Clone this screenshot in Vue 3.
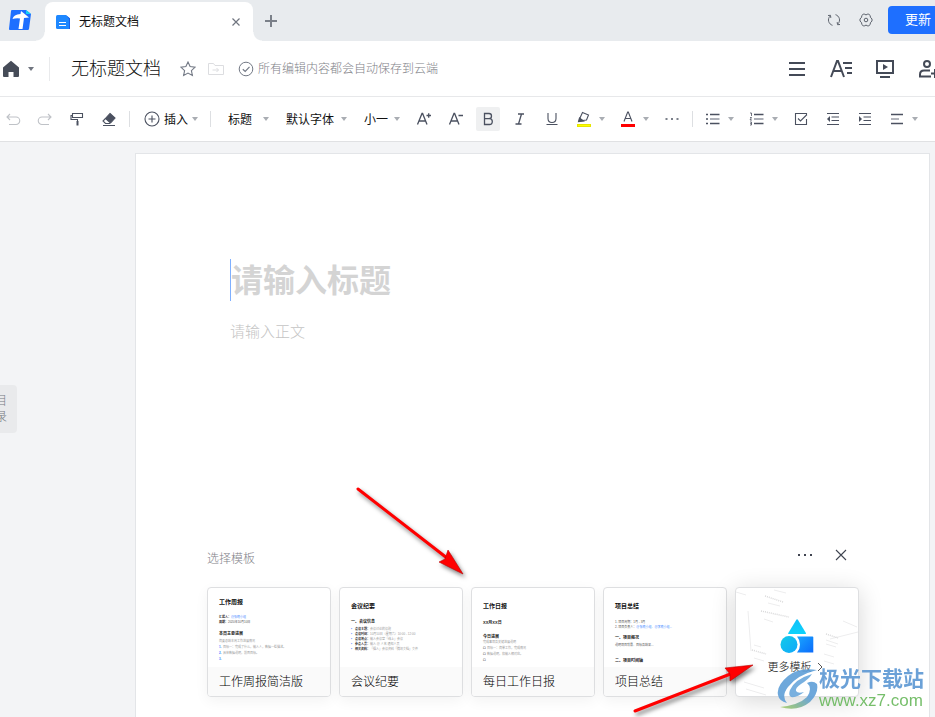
<script setup>
import { ref } from 'vue'

const title = ref('')
const body = ref('')

const caret = 'M0 0h6L3 4z'

const picks = [
  { label: '段落样式', value: '标题', cls: 'w-short' },
  { label: '字体', value: '默认字体', cls: 'w-long' },
  { label: '字号', value: '小一', cls: 'w-size' },
]

const templates = [
  {
    name: '工作周报简洁版',
    cls: 'weekly',
    heading: '工作周报',
    lines: [
      { k: 'meta', b: '汇报人：', link: '@张晓小组' },
      { k: 'meta', b: '周期：', t: '2020年10月10日' },
      { k: 'sub', b: '本周主要进展' },
      { k: 'faint', t: '简要总结本周工作进展情况' },
      { k: 'item', n: '1.', t: '目标一：完成了什么，输入人，数据一些描述。' },
      { k: 'item', n: '2.', t: '具体数据说明，前面目标。' },
      { k: 'item', n: '3.', t: '' },
    ],
  },
  {
    name: '会议纪要',
    cls: 'meeting',
    heading: '会议纪要',
    lines: [
      { k: 'sub', b: '一、会议信息' },
      { k: 'item', n: '•', b: '会议主题：', t: '会议讨论的议题' },
      { k: 'item', n: '•', b: '会议时间：', t: '10月10日（星期六）10:00 - 12:00' },
      { k: 'item', n: '•', b: '会议地点：', t: '输入会议室「线上」会议' },
      { k: 'item', n: '•', b: '参会人员：', t: '输入 @ 人名 通知人员' },
      { k: 'item', n: '•', b: '相关资料：', t: '「插入」会议资料「腾讯文档」文件' },
    ],
  },
  {
    name: '每日工作日报',
    cls: 'daily',
    heading: '工作日报',
    lines: [
      { k: 'sub', b: 'XX月XX日' },
      { k: 'sub', b: '今日进展' },
      { k: 'faint', t: '完成事项及关键进展说明' },
      { k: 'item', n: '☐', t: '目标一：简单工作，完成情况' },
      { k: 'item', n: '☐', t: '数据说明，和输入相对应。' },
      { k: 'item', n: '☐', t: '' },
    ],
  },
  {
    name: '项目总结',
    cls: 'summary',
    heading: '项目总结',
    lines: [
      { k: 'meta', t: '1. 项目周期：1月 - 3月' },
      { k: 'meta', t: '2. 项目负责人：', link: '@张晓小组、@李晓小组...' },
      { k: 'sub', b: '一、项目概况' },
      { k: 'meta', t: '说明项目背景、目标及结果...' },
      { k: 'sub last', b: '二、项目时间轴' },
    ],
  },
]
</script>

<template>
  <div class="app">
    <header class="tabs">
      <svg class="logo" viewBox="0 0 24 22">
        <path d="M4 1h14l5 4-2 15q-.2 1-1.200 1H2q-1.200 0-1-1.200L3 2q.1-1 1-1z" fill="#1e6fff" />
        <path d="M18 1l5 4h-5z" fill="#12d3f5" />
        <path d="M13 2l8 6.500-5 .5-1.500 11H10.500L12 9.500Q8 9 4.500 10 5.500 5.500 12.500 5z" fill="#fff" />
      </svg>
      <div class="tab">
        <svg class="doc" viewBox="0 0 14 14">
          <path d="M1.500 0H10l4 3.500V14H1.500Q0 14 0 12.500v-11Q0 0 1.500 0z" fill="#1e88ff" />
          <path d="M10 0l4 3.500V14h-1V4z" fill="#1b5fe8" />
          <path d="M3 7.500h7M3 10.500h7" stroke="#fff" stroke-width="1" />
        </svg>
        <span class="tab-name">无标题文档</span>
        <button class="ghost" aria-label="关闭标签">
          <svg width="8" height="8" viewBox="0 0 8 8"><path d="M.5.5l7 7M7.500.5l-7 7" stroke="#70757f" stroke-width="1.200" /></svg>
        </button>
      </div>
      <button class="ghost plus" aria-label="新建标签">
        <svg width="12" height="12" viewBox="0 0 12 12"><path d="M6 0v12M0 6h12" stroke="#7b8089" stroke-width="2" /></svg>
      </button>
      <div class="window-tools">
        <button class="ghost" aria-label="刷新">
          <svg width="14" height="14" viewBox="0 0 14 14" fill="none" stroke="#5c626c" stroke-width="1">
            <path d="M5.500 12.300A5.500 5.500 0 0 1 3 3.200M1 2.500l2.500-.2.300 2.600M8.500 1.700A5.500 5.500 0 0 1 11 10.800M13 11.500l-2.500.2-.3-2.600" />
          </svg>
        </button>
        <button class="ghost" aria-label="设置">
          <svg width="14" height="14" viewBox="0 0 14 14" fill="none" stroke="#5c626c" stroke-width="1">
            <path d="M4.200 1.200h1.600L7 2l1.200-.8h1.600l1.400 1.300.2 1.700L13 6v2l-1.600 1.800-.2 1.700-1.400 1.300H8.200L7 12l-1.200.8H4.200l-1.400-1.300-.2-1.700L1 8V6l1.600-1.800.2-1.700z" stroke-linejoin="round" />
            <circle cx="7" cy="7" r="1.800" />
          </svg>
        </button>
        <button class="update">更新</button>
      </div>
    </header>

    <section class="title-bar">
      <button class="ghost home" aria-label="首页">
        <svg width="18" height="18" viewBox="0 0 18 18"><path d="M9 .8L17 7.500V16q0 1-1 1h-4.500v-5H6.500v5H2q-1 0-1-1V7.500z" fill="#464c58" /></svg>
        <svg class="caret" viewBox="0 0 6 4"><path :d="caret" fill="#70757f" /></svg>
      </button>
      <i class="rule"></i>
      <h1>无标题文档</h1>
      <button class="ghost" aria-label="收藏">
        <svg width="16" height="16" viewBox="0 0 16 16"><path d="M8 1l2.100 4.600 5 .6-3.700 3.400 1 4.900L8 12.100l-4.400 2.400 1-4.900L.9 6.200l5-.6z" fill="none" stroke="#737985" stroke-width="1.100" /></svg>
      </button>
      <button class="ghost" aria-label="移动到">
        <svg width="16" height="14" viewBox="0 0 16 14" fill="none" stroke="#dcdde0"><path d="M.5 12.500V1.500h5l1.500 2h8.500v9zM4.500 8h6M8.500 6l2 2-2 2" /></svg>
      </button>
      <p class="saved">
        <svg width="16" height="16" viewBox="0 0 16 16" fill="none" stroke="#737985"><circle cx="8" cy="8" r="6.800" /><path d="M4.800 8.200l2.400 2.300 4.300-4.600" stroke-width="1.200" /></svg>
        <span>所有编辑内容都会自动保存到云端</span>
      </p>
      <div class="doc-tools">
        <button class="ghost" aria-label="菜单">
          <svg viewBox="0 0 24 24" stroke="#444a57" stroke-width="2"><path d="M4 6h16M4 12h16M4 18h16" /></svg>
        </button>
        <button class="ghost" aria-label="文字样式">
          <svg viewBox="0 0 24 24" fill="none" stroke="#444a57" stroke-width="2"><path d="M2 20L8 4h1l6 16M4.500 14h8M14 6h9M16 11h7M18 16h5" /></svg>
        </button>
        <button class="ghost" aria-label="演示">
          <svg viewBox="0 0 24 24" fill="none" stroke="#444a57" stroke-width="2"><path d="M4 4h16v12H4zM7 20h10" /><path d="M10 7l5 3-5 3z" fill="#444a57" stroke="none" /></svg>
        </button>
        <button class="ghost" aria-label="邀请协作">
          <svg viewBox="0 0 24 24" fill="none" stroke="#444a57" stroke-width="2"><circle cx="10" cy="7" r="3" /><path d="M14 19.500H3v-2q0-4 4-4h6M18 12v9M14 16.500h8" /></svg>
        </button>
      </div>
    </section>

    <nav class="toolbar" aria-label="格式">
      <button class="tool" aria-label="撤销">
        <svg viewBox="0 0 16 16" class="dim"><path d="M5 3L2 6l3 3M2 6h9a3.500 3.500 0 0 1 0 7.500H4" /></svg>
      </button>
      <button class="tool" aria-label="重做">
        <svg viewBox="0 0 16 16" class="dim"><path d="M11 3l3 3-3 3M14 6H5a3.500 3.500 0 0 0 0 7.500h7" /></svg>
      </button>
      <button class="tool" aria-label="格式刷">
        <svg viewBox="0 0 16 16"><path d="M3.500 2.500h10v4h-10zM3.500 4.500h-1.500v4h6.500v2" /><path d="M8.500 10v4.500" stroke-width="2" /></svg>
      </button>
      <button class="tool" aria-label="清除格式">
        <svg viewBox="0 0 16 16"><path d="M9 2.500l5 4.500-4.500 5-5-4.500z" class="solid" /><path d="M4.500 7.500L2 10l2.500 2.500H9M2 14.500h12" /></svg>
      </button>
      <i class="split"></i>
      <button class="insert">
        <svg width="16" height="16" viewBox="0 0 16 16"><circle cx="8" cy="8" r="7" /><path d="M8 4.500v7M4.500 8h7" /></svg>
        <span>插入</span>
        <svg class="caret" viewBox="0 0 6 4"><path :d="caret" /></svg>
      </button>
      <i class="split"></i>
      <div class="picks">
        <label v-for="p in picks" :key="p.value" class="pick">
          <select :class="p.cls" :aria-label="p.label"><option>{{ p.value }}</option></select>
          <svg class="caret" viewBox="0 0 6 4"><path :d="caret" /></svg>
        </label>
      </div>
      <button class="tool" aria-label="增大字号">
        <svg viewBox="0 0 16 16"><path d="M1.500 13.500L6 2.500h.6L11 13.500M3 10h6.500M10.500 4.500h4.500M12.700 2.200v4.600" stroke-width="1.300" /></svg>
      </button>
      <button class="tool" aria-label="减小字号">
        <svg viewBox="0 0 16 16"><path d="M1.500 13.500L6 2.500h.6L11 13.500M3 10h6.500M10.500 4.500h4.500" stroke-width="1.300" /></svg>
      </button>
      <button class="tool active" aria-label="加粗" aria-pressed="true">
        <svg viewBox="0 0 16 16"><path d="M4.500 2.500H9q2.500 0 2.500 2.600T9 7.700H4.500zM4.500 7.700H9.500q2.800 0 2.800 2.900T9.500 13.500h-5z" stroke-width="1.300" /></svg>
      </button>
      <button class="tool" aria-label="斜体">
        <svg viewBox="0 0 16 16"><path d="M6 3h6M3.500 13h6M9.500 3l-3 10" stroke-width="1.300" /></svg>
      </button>
      <button class="tool" aria-label="下划线">
        <svg viewBox="0 0 16 16"><path d="M4 2v5.500q0 4 4 4t4-4V2M2.500 13.500h11" /></svg>
      </button>
      <div class="combo">
        <button class="tool" aria-label="突出显示">
          <svg viewBox="0 0 16 16"><path d="M6.500 1.500l6 2.500-2 5-4 .5-3-1.500z" /><path d="M3.500 7l4 3-5 .5z" class="solid" /><path d="M1 14.500h14" stroke="#e6e600" stroke-width="3" /><path d="M2 14.500h12" stroke="#ff0" stroke-width="1" /></svg>
        </button>
        <svg class="caret" viewBox="0 0 6 4"><path :d="caret" /></svg>
      </div>
      <div class="combo">
        <button class="tool" aria-label="文字颜色">
          <svg viewBox="0 0 16 16"><path d="M4 10.500L7.700 1h.6L12 10.500M5.300 7.500h5.400" /><path d="M1 14.500h14" stroke="#f00" stroke-width="3" /></svg>
        </button>
        <svg class="caret" viewBox="0 0 6 4"><path :d="caret" /></svg>
      </div>
      <button class="tool" aria-label="更多格式">
        <svg viewBox="0 0 16 16"><path d="M1.500 8h2M7 8h2M12.500 8h2" stroke-width="2" stroke="#7b808a" /></svg>
      </button>
      <i class="split"></i>
      <div class="combo">
        <button class="tool" aria-label="项目符号">
          <svg viewBox="0 0 16 16"><path d="M1 3.500h2M1 8h2M1 12.500h2M5 3.500h9.500M5 12.500h9.500" stroke-width="1.500" /><path d="M5 8h9.500" stroke="#9296a0" stroke-width="1.500" /></svg>
        </button>
        <svg class="caret" viewBox="0 0 6 4"><path :d="caret" /></svg>
      </div>
      <div class="combo">
        <button class="tool" aria-label="编号">
          <svg viewBox="0 0 16 16"><path d="M5 3.500h9.500M5 12.500h9.500" stroke-width="1.300" /><path d="M5 8h9.500" stroke="#9296a0" stroke-width="1.500" /><path d="M1 2h1.500v3M1 6.500h1.500L1 9h2M1 11h1.500v1.500H1.500h1V14H1" stroke-width=".8" /></svg>
        </button>
        <svg class="caret" viewBox="0 0 6 4"><path :d="caret" /></svg>
      </div>
      <button class="tool" aria-label="任务列表">
        <svg viewBox="0 0 16 16"><path d="M13.500 8v5.500h-11v-11h11v2M5 7.500L7.500 10l6.500-6.500" /></svg>
      </button>
      <button class="tool" aria-label="减少缩进">
        <svg viewBox="0 0 16 16"><path d="M2 2.500h12M6.500 6h7.500M6.500 9.500h7.500M2 13.500h12" /><path d="M5 5v6L2 8z" class="solid" stroke="none" /></svg>
      </button>
      <button class="tool" aria-label="增加缩进">
        <svg viewBox="0 0 16 16"><path d="M2 2.500h12M6.500 6h7.500M6.500 9.500h7.500M2 13.500h12" /><path d="M2 5v6l3-3z" class="solid" stroke="none" /></svg>
      </button>
      <div class="combo">
        <button class="tool" aria-label="对齐">
          <svg viewBox="0 0 16 16"><path d="M2 3.500h12M2 12.500h12" stroke-width="1.400" /><path d="M2 8h8" stroke="#9296a0" stroke-width="1.400" /></svg>
        </button>
        <svg class="caret" viewBox="0 0 6 4"><path :d="caret" /></svg>
      </div>
    </nav>

    <main class="desk">
      <button class="outline">目录</button>
      <article class="page">
        <div class="editor">
          <input v-model="title" class="title-input" aria-label="标题" placeholder="请输入标题" />
          <input v-model="body" class="body-input" aria-label="正文" placeholder="请输入正文" />
        </div>
        <section class="templates">
          <div class="templates-head">
            <h2>选择模板</h2>
            <button class="ghost" aria-label="更多">
              <svg width="16" height="16" viewBox="0 0 16 16"><path d="M1 8h2M7 8h2M13 8h2" stroke="#3f4450" stroke-width="2" /></svg>
            </button>
            <button class="ghost" aria-label="关闭">
              <svg width="16" height="16" viewBox="0 0 16 16"><path d="M3 3l10 10M13 3L3 13" stroke="#3f4450" stroke-width="1.100" /></svg>
            </button>
          </div>
          <div class="cards">
            <button v-for="t in templates" :key="t.name" class="card">
              <span class="preview" :class="t.cls">
                <strong>{{ t.heading }}</strong>
                <span v-for="(l, i) in t.lines" :key="i" class="line" :class="l.k">
                  <i v-if="l.n">{{ l.n }}</i><b v-if="l.b">{{ l.b }}</b><span v-if="l.t">{{ l.t }}</span><em v-if="l.link">{{ l.link }}</em>
                </span>
              </span>
              <span class="card-name">{{ t.name }}</span>
            </button>
            <button class="card more">
              <svg class="sheets" viewBox="0 0 122 108" preserveAspectRatio="xMidYMid slice" fill="none" stroke="#ededee">
                <path d="M0 4l10 3M12 23l3 40M94 51l28-7" />
                <path d="M29 8l18 6M25 23l28 6M90 46l12 4M16 62l14 4" stroke="#d9d9da" stroke-width="1.500" stroke-dasharray="1 1" />
                <path d="M38 2l12 3M32 15l12 3M28 31l9 3M90 52l12 4M90 56l10 3M88 66l10 3M88 73l10 3M18 57l7 2M18 70l10 3M8 94l20 6M10 101l20 6M107 33l14 6" />
              </svg>
              <svg class="shapes" viewBox="0 0 34 34">
                <defs>
                  <linearGradient id="tri" x1="0" y1="0" x2="0" y2="1"><stop offset="0" stop-color="#0fc0fa" /><stop offset="1" stop-color="#0dd2fb" /></linearGradient>
                  <linearGradient id="dot" x1="0" y1="0" x2="1" y2="1"><stop offset="0" stop-color="#12cbe8" /><stop offset="1" stop-color="#10a8fb" /></linearGradient>
                  <linearGradient id="box" x1="0" y1="0" x2="1" y2="1"><stop offset="0" stop-color="#19a6ff" /><stop offset="1" stop-color="#0b6bfb" /></linearGradient>
                </defs>
                <path d="M16.500.5q.8-.6 1.400.3l8 13.200q.3 1-.8 1H9q-1.200 0-.7-1z" fill="url(#tri)" />
                <path d="M17 17.500h15.500q.8 0 .8.800v15.200H17q3-3.500 3-8t-3-8z" fill="url(#box)" />
                <circle cx="9" cy="25.500" r="8.500" fill="url(#dot)" />
              </svg>
              <span class="more-name">更多模板
                <svg width="6" height="10" viewBox="0 0 6 10"><path d="M1 1l4 4-4 4" fill="none" stroke="#555" /></svg>
              </span>
            </button>
          </div>
        </section>
      </article>
    </main>

    <svg class="arrow arrow-down" viewBox="0 0 116 96">
      <path d="M6 6L95 75" stroke="#f00" stroke-width="3" stroke-linecap="round" />
      <path d="M111 91L87 79l6-3 3-9z" fill="#f00" stroke="#b00" stroke-width=".6" />
    </svg>
    <svg class="arrow arrow-up" viewBox="0 0 130 58">
      <path d="M6 50L104 12" stroke="#f00" stroke-width="3" stroke-linecap="round" />
      <path d="M124 4L101 20v-7l-5-6z" fill="#f00" stroke="#b00" stroke-width=".6" />
    </svg>

    <div class="watermark">
      <svg width="42" height="42" viewBox="0 0 42 42">
        <defs>
          <linearGradient id="swirl" x1="1" y1="0" x2="0" y2="1"><stop offset=".4" stop-color="#5f9fd8" /><stop offset=".75" stop-color="#86b98a" /><stop offset="1" stop-color="#a9cf62" /></linearGradient>
        </defs>
        <path d="M40 2Q22-1 11 8-1 18 1 27q1 6 9 8-6-7 1-16Q20 7 40 2z" fill="#5f9fd8" />
        <path d="M35 6Q18 11 13 22q-2 5 1 7 6 1 13-5-6 2-8-1-1-3 5-7 8-5 11-10z" fill="#6ba8dc" />
        <path d="M30 15q6 5 0 14Q22 37 3 39q18 5 30-5 9-9 7-18-4-4-10-1z" fill="url(#swirl)" />
      </svg>
      <div>
        <strong>极光下载站</strong>
        <span>www.xz7.com</span>
      </div>
    </div>
  </div>
</template>

<style>
body {
  overflow: hidden;
}
</style>

<style scoped>
.app {
  position: relative;
  display: flex;
  flex-direction: column;
  min-height: 100vh;
  overflow: hidden;
  background: #fff;
  color: #111;
  font: 300 12px/16px "Liberation Sans", "Noto Sans CJK SC", sans-serif;
}
* {
  box-sizing: border-box;
}
button, input, select {
  margin: 0;
  padding: 0;
  border: 0;
  outline: 0;
  background: none;
  color: inherit;
  font: inherit;
}
h1, h2, p {
  margin: 0;
  font-weight: 300;
}
svg {
  display: block;
  flex: none;
}
.ghost {
  display: flex;
  align-items: center;
  justify-content: center;
}
.caret {
  width: 6px;
  height: 4px;
}

.tabs {
  display: flex;
  height: 41px;
  background: #e8ebee;
}
.logo {
  width: 24px;
  height: 22px;
  margin: 9px 13px 0 8px;
}
.tab {
  position: relative;
  display: flex;
  align-items: center;
  width: 208px;
  margin-top: 2px;
  padding: 0 13px 0 11px;
  border-radius: 8px 8px 0 0;
  background: #fff;
}
.tab::before,
.tab::after {
  content: "";
  position: absolute;
  bottom: 0;
  width: 9px;
  height: 9px;
}
.tab::before {
  right: 100%;
  background: radial-gradient(circle at 0 0, #e8ebee 8px, #fff 9px);
}
.tab::after {
  left: 100%;
  background: radial-gradient(circle at 100% 0, #e8ebee 8px, #fff 9px);
}
.doc {
  width: 14px;
  height: 14px;
}
.tab-name {
  flex: 1;
  margin-left: 9px;
  font-weight: 400;
}
.plus {
  margin-left: 12px;
}
.window-tools {
  display: flex;
  align-items: center;
  gap: 18px;
  margin: 0 -13px 2px auto;
}
.update {
  width: 60px;
  height: 28px;
  margin-left: -3px;
  border-radius: 4px;
  background: #1e6fff;
  color: #fff;
  font-size: 13px;
  font-weight: 400;
}

.title-bar {
  display: flex;
  align-items: center;
  height: 56px;
  padding-left: 2px;
  border-bottom: 1px solid #e7e8ea;
}
.home {
  gap: 8px;
}
.rule {
  width: 1px;
  height: 24px;
  margin: 0 21px 0 15px;
  background: #e9eaec;
}
h1 {
  margin-right: 19px;
  font-size: 18px;
  line-height: 32px;
}
h1 + .ghost {
  margin-right: 12px;
}
.saved {
  display: flex;
  align-items: center;
  gap: 4px;
  margin-left: 14px;
  color: #7f8288;
}
.saved span {
  padding-top: 1px;
}
.doc-tools {
  display: flex;
  gap: 20px;
  margin: 0 -6px 0 auto;
}
.doc-tools svg {
  width: 24px;
  height: 24px;
}

.toolbar {
  display: flex;
  align-items: center;
  gap: 8px;
  height: 45px;
  padding-left: 1px;
  border-bottom: 1px solid #e0e1e3;
}
.toolbar > * {
  flex: none;
}
.toolbar svg {
  fill: none;
  stroke: #4b5160;
  stroke-width: 1.100;
}
.toolbar .solid {
  fill: #4b5160;
}
.toolbar .caret {
  fill: #a9adb3;
  stroke: none;
}
.toolbar .dim {
  stroke: #bfc2c7;
}
.tool {
  display: flex;
  align-items: center;
  justify-content: center;
  width: 24px;
  height: 24px;
  border-radius: 2px;
}
.tool svg {
  width: 16px;
  height: 16px;
}
.toolbar .active {
  background: #eff0f1;
}
.split {
  width: 1px;
  height: 16px;
  background: #dddfe2;
}
.insert {
  display: flex;
  align-items: center;
  gap: 4px;
  padding: 0 4px 0 6px;
  font-weight: 400;
}
.insert span,
.pick select {
  padding-top: 2px;
}
.picks {
  display: flex;
  gap: 8px;
  margin-left: 4px;
}
.pick {
  display: flex;
  align-items: center;
  padding: 0 4px 0 5px;
}
.pick select {
  appearance: none;
  font-weight: 400;
}
.w-short {
  width: 35px;
}
.w-long {
  width: 55px;
}
.w-size {
  width: 30px;
}
.combo {
  display: flex;
  align-items: center;
  gap: 3px;
  padding-right: 3px;
}

.desk {
  position: relative;
  display: flex;
  flex: 1;
  padding: 11px 5px 0 135px;
  background: #f3f4f6;
}
.outline {
  position: absolute;
  top: 243px;
  left: -8px;
  width: 25px;
  height: 48px;
  padding: 0 10px 0 3px;
  border-radius: 4px;
  background: #e9eaec;
  color: #777b82;
}
.page {
  display: flex;
  flex: 1;
  flex-direction: column;
  border: 1px solid #e3e5e8;
  border-bottom: 0;
  background: #fff;
}
.editor {
  display: flex;
  flex-direction: column;
  gap: 18px;
  padding: 105px 94px 0;
}
.title-input {
  height: 42px;
  padding-top: 2px;
  border-left: 1px solid #7fb0ff;
  font-size: 32px;
  font-weight: 700;
}
.body-input {
  height: 24px;
  font-size: 15px;
}
.editor input::placeholder {
  color: #d4d4d4;
  opacity: 1;
}
.editor .body-input::placeholder {
  color: #c4c4c4;
}

.templates {
  margin-top: auto;
  padding: 0 70px 20px 71px;
}
.templates-head {
  display: flex;
  align-items: center;
  gap: 20px;
  margin-bottom: 16px;
  padding-right: 10px;
}
.templates-head .ghost {
  margin-bottom: 8px;
}
h2 {
  margin-right: auto;
  color: #7f8288;
  font-size: 12px;
  line-height: 24px;
}
.cards {
  display: grid;
  grid-template-columns: repeat(5, 1fr);
  gap: 8px;
}
.card {
  display: flex;
  flex-direction: column;
  min-width: 0;
  height: 110px;
  overflow: hidden;
  border: 1px solid #dedfe1;
  border-radius: 4px;
  background: #fff;
  box-shadow: 0 4px 14px rgba(0, 0, 0, 0.05);
  text-align: left;
}
.preview {
  display: flex;
  flex: 1;
  flex-direction: column;
  width: 100%;
  padding: 10px 11px 0;
  font-size: 3px;
  font-weight: 400;
  line-height: 5px;
  white-space: nowrap;
}
.preview strong {
  margin-bottom: 9px;
  font-size: 6px;
  font-weight: 700;
  line-height: 8px;
}
.meeting, .daily, .summary {
  padding-top: 14px;
}
.meeting strong {
  margin-bottom: 7px;
}
.line {
  display: flex;
  color: #555;
}
.line b {
  color: #222;
  font-weight: 700;
}
.line i {
  width: 4px;
  color: #2f7bff;
  font-style: normal;
  font-weight: 700;
}
.line em {
  color: #4b8cff;
  font-style: normal;
}
.daily .line i {
  color: #444;
}
.sub {
  margin: 1px 0;
  font-size: 4px;
  line-height: 8px;
}
.weekly .sub {
  margin-top: 5px;
}
.weekly .item,
.daily .item {
  line-height: 6px;
}
.daily .sub {
  margin-bottom: 4px;
  line-height: 6px;
}
.daily .sub + .sub {
  margin-top: 4px;
  margin-bottom: 0;
}
.summary strong {
  margin-bottom: 10px;
}
.summary .sub {
  margin-top: 4px;
}
.summary .last {
  margin-top: 9px;
}
.faint, .item {
  color: #999;
}
.card-name {
  width: 100%;
  padding: 2px 11px 0;
  background: #fafafa;
  color: #000;
  line-height: 27px;
}
.more {
  position: relative;
  align-items: center;
  padding-top: 31px;
  box-shadow: 0 4px 24px rgba(0, 0, 0, 0.16);
}
.sheets {
  position: absolute;
  inset: 0;
  width: 100%;
  height: 100%;
}
.shapes {
  position: relative;
  width: 34px;
  height: 34px;
}
.more-name {
  position: relative;
  display: flex;
  align-items: center;
  gap: 5px;
  margin: 6px 4px 0 0;
  font-size: 11px;
}

.arrow {
  position: absolute;
  fill: none;
  filter: drop-shadow(2px 3px 2px rgba(0, 0, 0, 0.5));
}
.arrow-down {
  top: 483px;
  left: 352px;
  width: 116px;
}
.arrow-up {
  top: 661px;
  left: 629px;
  width: 130px;
}
.watermark {
  position: absolute;
  right: 11px;
  bottom: 6px;
  display: flex;
  align-items: center;
  opacity: 0.9;
}
.watermark div {
  display: flex;
  flex-direction: column;
}
.watermark strong {
  color: #5c97d3;
  font-size: 21px;
  font-weight: 700;
  line-height: 24px;
}
.watermark span {
  color: #68b85b;
  font-size: 17px;
  font-weight: 400;
  line-height: 20px;
}
</style>
